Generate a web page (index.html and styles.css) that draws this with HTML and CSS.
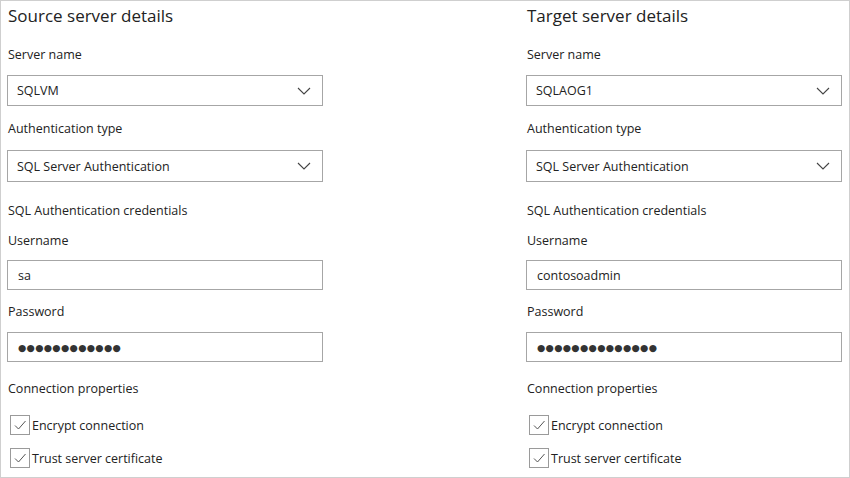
FILE: index.html
```html
<!DOCTYPE html>
<html>
<head>
<meta charset="utf-8">
<link rel="stylesheet" href="styles.css">
</head>
<body>
<div class="frame">
  <section class="col">
    <h2 class="title">Source server details</h2>
    <div class="label l-server">Server name</div>
    <div class="box select s1">
      <span class="val">SQLVM</span>
      <svg class="chev" width="14" height="8" viewBox="0 0 14 8"><path d="M1 1 L7 7 L13 1" fill="none" stroke="#444" stroke-width="1.1"/></svg>
    </div>
    <div class="label l-auth">Authentication type</div>
    <div class="box select s2">
      <span class="val">SQL Server Authentication</span>
      <svg class="chev" width="14" height="8" viewBox="0 0 14 8"><path d="M1 1 L7 7 L13 1" fill="none" stroke="#444" stroke-width="1.1"/></svg>
    </div>
    <div class="label l-cred">SQL Authentication credentials</div>
    <div class="label l-user">Username</div>
    <div class="box input"><span class="val">sa</span></div>
    <div class="label l-pass">Password</div>
    <div class="box input"><span class="val dots">●●●●●●●●●●●●</span></div>
    <div class="label l-conn">Connection properties</div>
    <label class="check c1"><span class="cb"><svg width="14" height="12" viewBox="0 0 14 12"><path d="M2 6.5 L5.5 10 L12.5 2" fill="none" stroke="#555" stroke-width="1"/></svg></span>Encrypt connection</label>
    <label class="check c2"><span class="cb"><svg width="14" height="12" viewBox="0 0 14 12"><path d="M2 6.5 L5.5 10 L12.5 2" fill="none" stroke="#555" stroke-width="1"/></svg></span>Trust server certificate</label>
  </section>
  <section class="col">
    <h2 class="title">Target server details</h2>
    <div class="label l-server">Server name</div>
    <div class="box select s1">
      <span class="val">SQLAOG1</span>
      <svg class="chev" width="14" height="8" viewBox="0 0 14 8"><path d="M1 1 L7 7 L13 1" fill="none" stroke="#444" stroke-width="1.1"/></svg>
    </div>
    <div class="label l-auth">Authentication type</div>
    <div class="box select s2">
      <span class="val">SQL Server Authentication</span>
      <svg class="chev" width="14" height="8" viewBox="0 0 14 8"><path d="M1 1 L7 7 L13 1" fill="none" stroke="#444" stroke-width="1.1"/></svg>
    </div>
    <div class="label l-cred">SQL Authentication credentials</div>
    <div class="label l-user">Username</div>
    <div class="box input"><span class="val">contosoadmin</span></div>
    <div class="label l-pass">Password</div>
    <div class="box input"><span class="val dots">●●●●●●●●●●●●●●</span></div>
    <div class="label l-conn">Connection properties</div>
    <label class="check c1"><span class="cb"><svg width="14" height="12" viewBox="0 0 14 12"><path d="M2 6.5 L5.5 10 L12.5 2" fill="none" stroke="#555" stroke-width="1"/></svg></span>Encrypt connection</label>
    <label class="check c2"><span class="cb"><svg width="14" height="12" viewBox="0 0 14 12"><path d="M2 6.5 L5.5 10 L12.5 2" fill="none" stroke="#555" stroke-width="1"/></svg></span>Trust server certificate</label>
  </section>
</div>
</body>
</html>
```
FILE: styles.css
```css
* { box-sizing: border-box; }
html, body { margin: 0; padding: 0; background: #fff; }
body {
  font-family: "Open Sans", "Noto Sans", sans-serif;
  color: #222;
  font-size: 12.5px;
}
.frame {
  width: 850px;
  height: 478px;
  border: 1px solid #cfcfcf;
  display: grid;
  grid-template-columns: 316px 316px;
  column-gap: 203px;
  padding-left: 6px;
  overflow: hidden;
}
.col { display: flex; flex-direction: column; }
.title {
  margin: 3px 0 0 1px;
  font-size: 17px;
  font-weight: 400;
  line-height: 24px;
  height: 24px;
}
.label { line-height: 22px; height: 20px; margin-left: 1px; }
.l-server { margin-top: 16px; }
.l-auth { margin-top: 12px; }
.l-cred { margin-top: 18px; }
.l-user { margin-top: 10px; }
.l-pass { margin-top: 11px; }
.l-conn { margin-top: 16px; }
.box {
  border: 1px solid #a6a6a6;
  display: flex;
  align-items: center;
  padding: 0 10px 0 9px;
}
.select { justify-content: space-between; }
.s1 { height: 31px; margin-top: 11px; }
.s2 { height: 32px; margin-top: 12px; }
.input { height: 30px; margin-top: 10px; padding-left: 10px; }
.l-pass + .input { margin-top: 11px; }
.chev { margin-right: 1px; }
.dots {
  font-family: "DejaVu Sans", sans-serif;
  font-size: 9.5px;
  letter-spacing: 0.3px;
  color: #333;
}
.check {
  display: flex;
  align-items: center;
  height: 20px;
  margin-left: 3px;
}
.c1 { margin-top: 17px; }
.c2 { margin-top: 13px; }
.cb {
  width: 20px;
  height: 20px;
  border: 1px solid #9a9a9a;
  display: flex;
  align-items: center;
  justify-content: center;
  margin-right: 2px;
}
```
